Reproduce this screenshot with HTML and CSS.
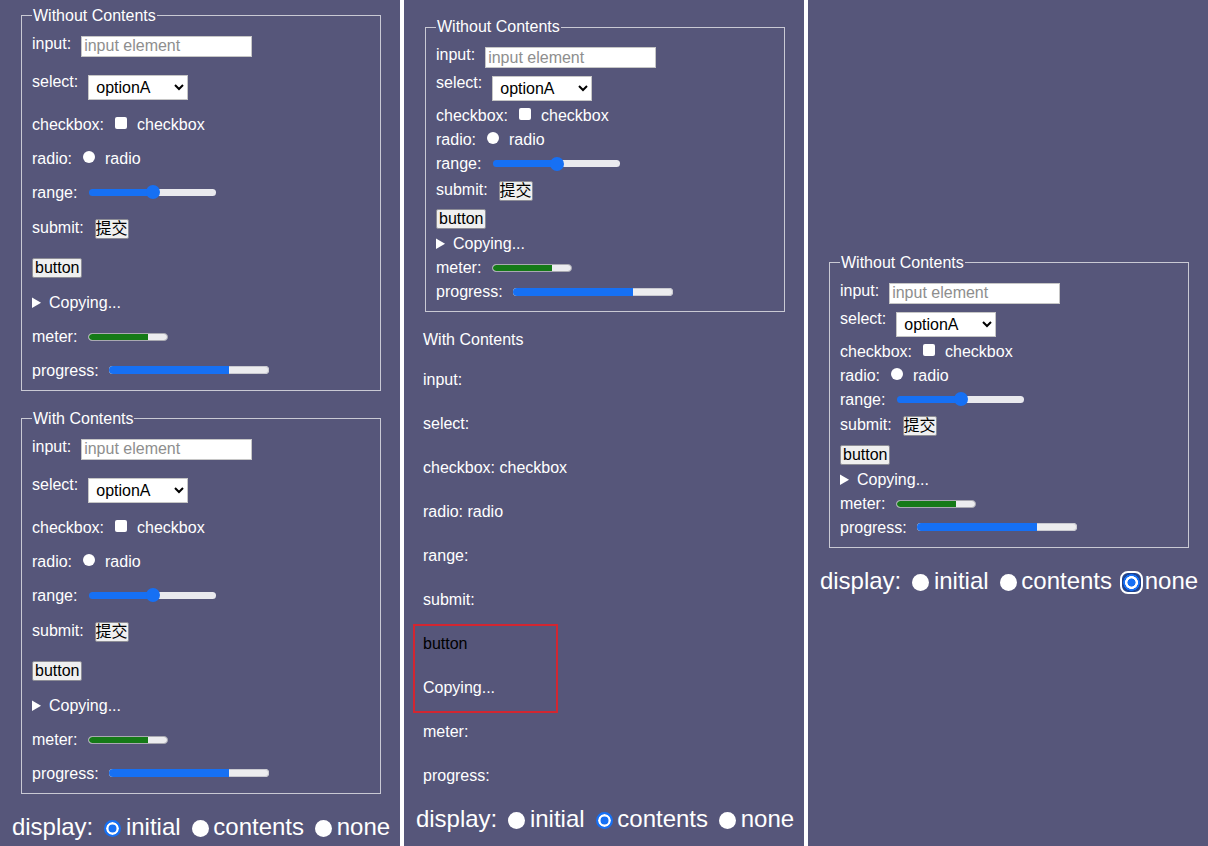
FILE: index.html
```html
<!DOCTYPE html>
<html lang="en">
<head>
<meta charset="utf-8">
<title>display: contents on form controls</title>
<link rel="stylesheet" href="styles.css">
</head>
<body>
<main class="board">

  <!-- Panel 1: display initial -->
  <section class="panel panel--first">
    <fieldset class="group group--spaced">
      <legend>Without Contents</legend>
      <div class="rows">
        <div class="row"><span>input:</span><input class="text-input" type="text" placeholder="input element"></div>
        <div class="row"><span>select:</span><select class="select"><option>optionA</option><option>optionB</option></select></div>
        <div class="row"><span>checkbox:</span><input class="check" type="checkbox"><span>checkbox</span></div>
        <div class="row"><span>radio:</span><input class="dot" type="radio"><span>radio</span></div>
        <div class="row"><span>range:</span><input class="slider" type="range" value="50"></div>
        <div class="row"><span>submit:</span><input class="btn btn--submit" type="submit" value="提交"></div>
        <div class="row"><button class="btn btn--plain" type="button">button</button></div>
        <div class="row"><details class="disclosure"><summary>Copying...</summary></details></div>
        <div class="row"><span>meter:</span><meter class="gauge" value="0.75"></meter></div>
        <div class="row"><span>progress:</span><progress class="bar" value="75" max="100"></progress></div>
      </div>
    </fieldset>
    <fieldset class="group group--spaced">
      <legend>With Contents</legend>
      <div class="rows">
        <div class="row"><span>input:</span><input class="text-input" type="text" placeholder="input element"></div>
        <div class="row"><span>select:</span><select class="select"><option>optionA</option><option>optionB</option></select></div>
        <div class="row"><span>checkbox:</span><input class="check" type="checkbox"><span>checkbox</span></div>
        <div class="row"><span>radio:</span><input class="dot" type="radio"><span>radio</span></div>
        <div class="row"><span>range:</span><input class="slider" type="range" value="50"></div>
        <div class="row"><span>submit:</span><input class="btn btn--submit" type="submit" value="提交"></div>
        <div class="row"><button class="btn btn--plain" type="button">button</button></div>
        <div class="row"><details class="disclosure"><summary>Copying...</summary></details></div>
        <div class="row"><span>meter:</span><meter class="gauge" value="0.75"></meter></div>
        <div class="row"><span>progress:</span><progress class="bar" value="75" max="100"></progress></div>
      </div>
    </fieldset>
    <div class="switch">display: <label><input class="pick" type="radio" name="d1" checked>initial</label> <label><input class="pick" type="radio" name="d1">contents</label> <label><input class="pick" type="radio" name="d1">none</label></div>
  </section>

  <!-- Panel 2: display contents -->
  <section class="panel panel--mid">
    <fieldset class="group group--compact">
      <legend>Without Contents</legend>
      <div class="rows">
        <div class="row"><span>input:</span><input class="text-input" type="text" placeholder="input element"></div>
        <div class="row"><span>select:</span><select class="select"><option>optionA</option><option>optionB</option></select></div>
        <div class="row"><span>checkbox:</span><input class="check" type="checkbox"><span>checkbox</span></div>
        <div class="row"><span>radio:</span><input class="dot" type="radio"><span>radio</span></div>
        <div class="row"><span>range:</span><input class="slider" type="range" value="50"></div>
        <div class="row"><span>submit:</span><input class="btn btn--submit" type="submit" value="提交"></div>
        <div class="row"><button class="btn btn--plain" type="button">button</button></div>
        <div class="row"><details class="disclosure"><summary>Copying...</summary></details></div>
        <div class="row"><span>meter:</span><meter class="gauge" value="0.75"></meter></div>
        <div class="row"><span>progress:</span><progress class="bar" value="75" max="100"></progress></div>
      </div>
    </fieldset>
    <div class="flat">
      <div class="flat-title">With Contents</div>
      <div class="flat-list">
        <div class="flat-row">input:</div>
        <div class="flat-row">select:</div>
        <div class="flat-row">checkbox: checkbox</div>
        <div class="flat-row">radio: radio</div>
        <div class="flat-row">range:</div>
        <div class="flat-row">submit:</div>
        <div class="flat-group">
          <div class="flat-row flat-row--dark">button</div>
          <div class="flat-row">Copying...</div>
        </div>
        <div class="flat-row">meter:</div>
        <div class="flat-row">progress:</div>
      </div>
    </div>
    <div class="switch">display: <label><input class="pick" type="radio" name="d2">initial</label> <label><input class="pick" type="radio" name="d2" checked>contents</label> <label><input class="pick" type="radio" name="d2">none</label></div>
  </section>

  <!-- Panel 3: display none -->
  <section class="panel panel--last">
    <fieldset class="group group--compact">
      <legend>Without Contents</legend>
      <div class="rows">
        <div class="row"><span>input:</span><input class="text-input" type="text" placeholder="input element"></div>
        <div class="row"><span>select:</span><select class="select"><option>optionA</option><option>optionB</option></select></div>
        <div class="row"><span>checkbox:</span><input class="check" type="checkbox"><span>checkbox</span></div>
        <div class="row"><span>radio:</span><input class="dot" type="radio"><span>radio</span></div>
        <div class="row"><span>range:</span><input class="slider" type="range" value="50"></div>
        <div class="row"><span>submit:</span><input class="btn btn--submit" type="submit" value="提交"></div>
        <div class="row"><button class="btn btn--plain" type="button">button</button></div>
        <div class="row"><details class="disclosure"><summary>Copying...</summary></details></div>
        <div class="row"><span>meter:</span><meter class="gauge" value="0.75"></meter></div>
        <div class="row"><span>progress:</span><progress class="bar" value="75" max="100"></progress></div>
      </div>
    </fieldset>
    <div class="switch">display: <label><input class="pick" type="radio" name="d3">initial</label> <label><input class="pick" type="radio" name="d3">contents</label> <label><input class="pick pick--focus" type="radio" name="d3" checked>none</label></div>
  </section>

</main>
</body>
</html>
```

FILE: styles.css
```css
* {
  box-sizing: border-box;
}

html,
body {
  margin: 0;
  padding: 0;
}

body {
  background: #ffffff;
  color: #ffffff;
  font-family: "Liberation Sans", Arial, "Noto Sans CJK SC", sans-serif;
  font-size: 16px;
  line-height: normal;
}

.board {
  display: grid;
  grid-template-columns: repeat(3, 400px);
  column-gap: 4px;
  height: 846px;
  overflow: hidden;
}

.panel {
  background: #56567a;
  display: flex;
  flex-direction: column;
  justify-content: center;
  padding: 0;
}

.panel--first {
  padding-top: 2px;
}

.panel--mid {
  padding-top: 5px;
}

.panel--last {
  padding-top: 3px;
}

/* ---------- fieldsets ---------- */
.group {
  width: 360px;
  min-width: 0;
  margin: 0 0 0 21px;
  padding: 10px;
  border: 1px solid #c9c9d4;
}

.group legend {
  padding: 0 1px;
}

.group + .group {
  margin-top: 19px;
}

.rows {
  display: flex;
  flex-direction: column;
  gap: 16px;
}

.group--compact .rows {
  gap: 6px;
}

.row {
  display: flex;
  align-items: flex-start;
  gap: 10px;
  white-space: nowrap;
}

/* ---------- controls ---------- */
.text-input {
  width: 171px;
  height: 21px;
  margin: 1px 0 0;
  padding: 0 2px;
  border: 1px solid #c6c6c6;
  border-radius: 0;
  background: #ffffff;
  color: #000000;
  font: 16px "Liberation Sans", Arial, sans-serif;
}

.text-input::placeholder {
  color: #8e8e8e;
}

.select {
  width: 100px;
  height: 25px;
  margin: 2px 0 0;
  padding: 0 0 0 3px;
  border: 1px solid #c6c6c6;
  border-radius: 0;
  background: #ffffff;
  color: #000000;
  font: 16px "Liberation Sans", Arial, sans-serif;
}

.check {
  -webkit-appearance: none;
  appearance: none;
  width: 12px;
  height: 12px;
  margin: 1px 0 0 1px;
  border-radius: 2px;
  background: #ffffff;
}

.dot {
  -webkit-appearance: none;
  appearance: none;
  width: 12px;
  height: 12px;
  margin: 1px 0 0 1px;
  border-radius: 50%;
  background: #ffffff;
}

.slider {
  -webkit-appearance: none;
  appearance: none;
  width: 127px;
  height: 16px;
  margin: 0.5px 0 3px 2px;
  padding: 0;
  background: transparent;
}

.slider::-webkit-slider-runnable-track {
  height: 7px;
  border-radius: 4px;
  background: linear-gradient(to right, #1670f4 50%, #e9e9ee 50%);
}

.slider::-webkit-slider-thumb {
  -webkit-appearance: none;
  appearance: none;
  width: 14px;
  height: 14px;
  margin-top: -3.5px;
  border-radius: 50%;
  background: #1670f4;
  border: none;
}

.btn {
  height: 20px;
  margin: 0;
  border: 1px solid #8d8d96;
  border-radius: 2px;
  background: #efefef;
  color: #000000;
  font: 16px/18px "Liberation Sans", Arial, "Noto Sans CJK SC", sans-serif;
}

.btn--submit {
  padding: 0;
  margin-left: 1px;
}

.btn--plain {
  padding: 0 2px;
  margin-top: 2.5px;
}

.disclosure summary {
  cursor: default;
}

.gauge {
  -webkit-appearance: none;
  appearance: none;
  width: 80px;
  height: 8px;
  margin: 5px 0 0 1px;
  background: transparent;
}

.gauge::-webkit-meter-bar {
  height: 8px;
  border: 1px solid #a9a9b2;
  border-radius: 4px;
  background: #ececef;
}

.gauge::-webkit-meter-optimum-value {
  border-radius: 3px 0 0 3px;
  background: #157a17;
}

.bar {
  -webkit-appearance: none;
  appearance: none;
  width: 160px;
  height: 8px;
  margin: 4.5px 0 0;
  border: none;
  background: transparent;
}

.bar::-webkit-progress-bar {
  border-radius: 4px;
  background: #ececef;
  box-shadow: inset 0 0 0 1px #c9c9d0;
}

.bar::-webkit-progress-value {
  border-radius: 4px 0 0 4px;
  background: #1670f4;
}

/* ---------- flattened (display: contents) ---------- */
.flat {
  margin: 19.1px 0 0 19px;
  display: flex;
  flex-direction: column;
}

.flat-title {
  margin-bottom: 21.6px;
}

.flat-list {
  display: flex;
  flex-direction: column;
  gap: 26px;
}

.flat-group {
  position: relative;
  display: flex;
  flex-direction: column;
  gap: 26px;
}

.flat-group::after {
  content: "";
  position: absolute;
  left: -10px;
  top: -11px;
  bottom: -15.5px;
  width: 141px;
  border: 2px solid #d22631;
  pointer-events: none;
}

.flat-row--dark {
  color: #000000;
}

/* ---------- display switch ---------- */
.switch {
  margin-top: 19.5px;
  padding-left: 2px;
  font-size: 24px;
  text-align: center;
  white-space: nowrap;
}

.flat + .switch {
  margin-top: 19.6px;
}

.pick {
  -webkit-appearance: none;
  appearance: none;
  width: 17px;
  height: 17px;
  margin: 0 4.5px;
  vertical-align: middle;
  border-radius: 50%;
  background: #ffffff;
}

.pick:checked {
  border: 2px solid #1670f4;
  background: #1670f4;
  box-shadow: inset 0 0 0 2.5px #ffffff;
}

.pick--focus:checked {
  border: none;
  border-radius: 5px;
  box-shadow: 0 0 0 1.5px #1d4290;
  background: radial-gradient(circle closest-side, #1670f4 0 3.8px, #ffffff 4.3px 6.2px, #1670f4 6.7px 8px, #1d4290 8.5px);
  outline: 2px solid #ffffff;
  outline-offset: 1.5px;
}
```
